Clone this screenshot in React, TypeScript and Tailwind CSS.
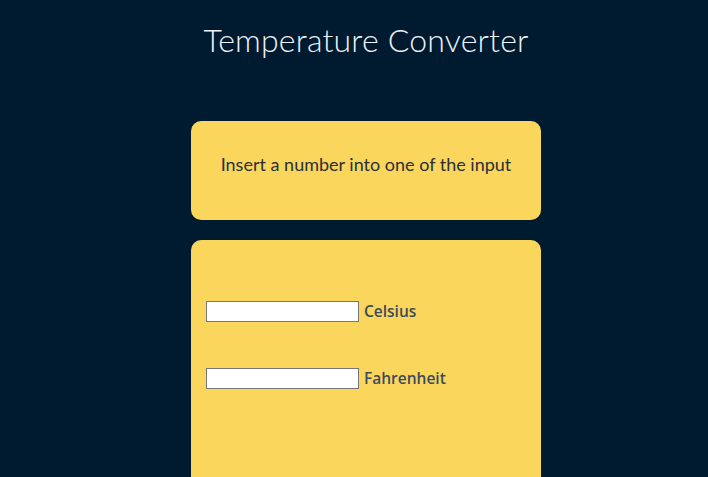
import React, { useState } from "react";

export default function App() {
  const [celsius, setCelsius] = useState("");
  const [fahrenheit, setFahrenheit] = useState("");

  const onCelsius = (v: string) => {
    setCelsius(v);
    const n = parseFloat(v);
    setFahrenheit(isNaN(n) ? "" : String(Math.round((n * 9) / 5 + 32)));
  };

  const onFahrenheit = (v: string) => {
    setFahrenheit(v);
    const n = parseFloat(v);
    setCelsius(isNaN(n) ? "" : String(Math.round(((n - 32) * 5) / 9)));
  };

  return (
    <div className="min-h-screen bg-[#001a2f] flex flex-col items-center pl-[24px] font-['Lato',sans-serif]">
      <h1 className="mt-[19px] text-[32px] leading-[42px] font-light text-[#eef2f7] tracking-[0.2px]">
        Temperature Converter
      </h1>

      <div className="mt-[60px] w-[350px] h-[99px] rounded-[10px] bg-[#fbd65d] flex items-center justify-center pb-[12px]">
        <p className="text-[18px] text-[#2a3038]">
          Insert a number into one of the input
        </p>
      </div>

      <div className="mt-[20px] w-[350px] h-[260px] rounded-t-[10px] bg-[#fbd65d] px-[15px] pt-[61px] flex flex-col gap-[46px] font-['Open_Sans',sans-serif]">
        <div className="flex items-center gap-[5px] h-[21px]">
          <input
            type="text"
            value={celsius}
            onChange={(e) => onCelsius(e.target.value)}
            className="w-[153px] h-[21px] bg-white border border-[#767676] outline-none px-1 text-[13px]"
          />
          <label className="text-[15.5px] leading-[21px] font-semibold text-[#3b4a5e]">Celsius</label>
        </div>
        <div className="flex items-center gap-[5px] h-[21px]">
          <input
            type="text"
            value={fahrenheit}
            onChange={(e) => onFahrenheit(e.target.value)}
            className="w-[153px] h-[21px] bg-white border border-[#767676] outline-none px-1 text-[13px]"
          />
          <label className="text-[15.5px] leading-[21px] font-semibold text-[#3b4a5e]">Fahrenheit</label>
        </div>
      </div>
    </div>
  );
}
